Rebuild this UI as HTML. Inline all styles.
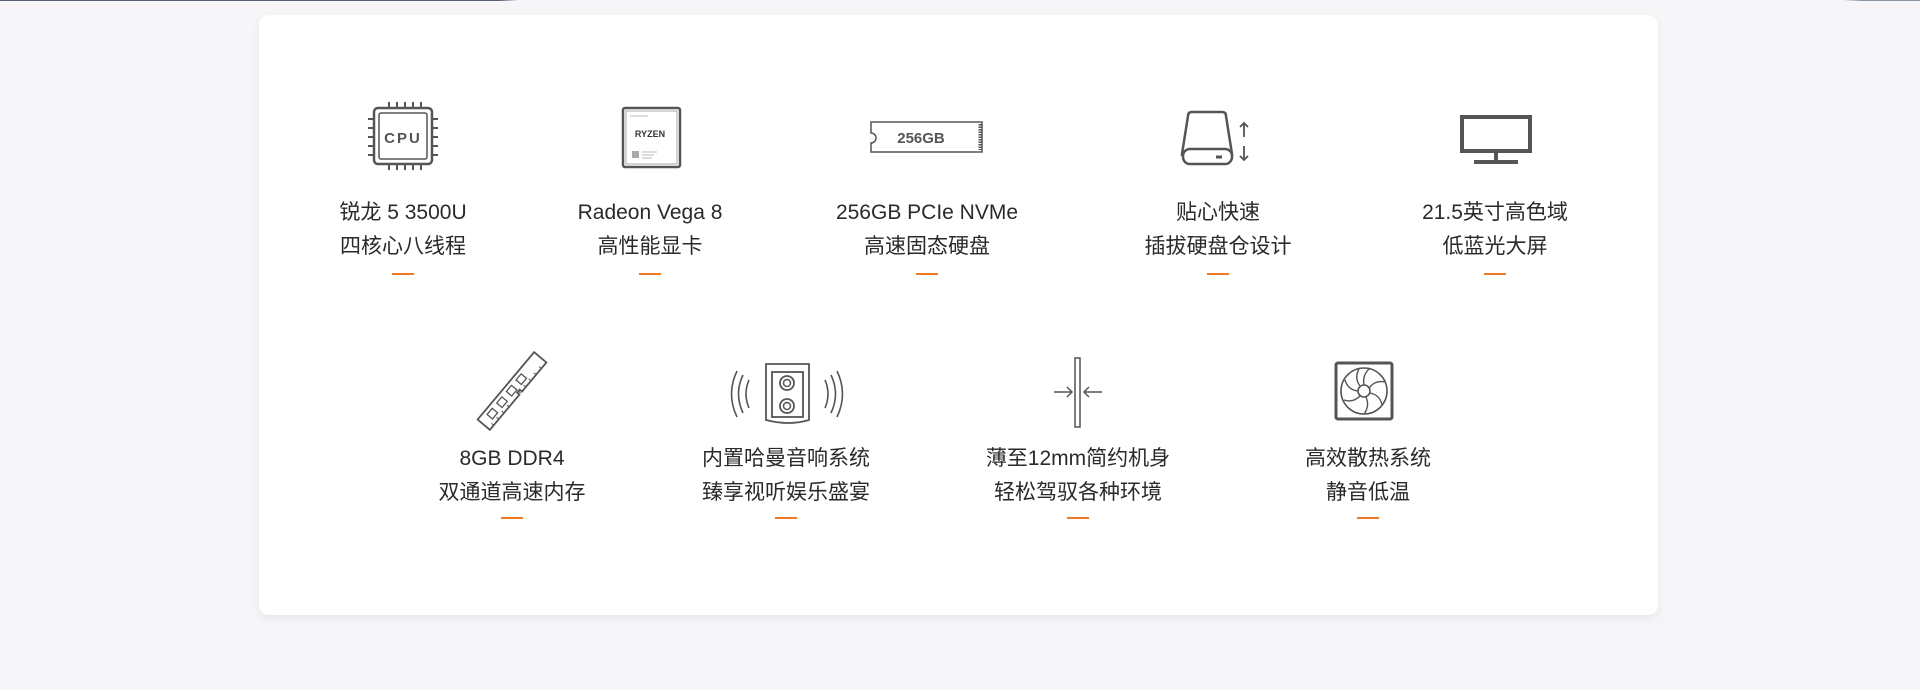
<!DOCTYPE html>
<html><head><meta charset="utf-8"><style>
html,body{margin:0;padding:0}
body{width:1920px;height:690px;background:#f6f6f8;position:relative;overflow:hidden;font-family:"Liberation Sans","Noto Sans CJK SC",sans-serif}
.top{position:absolute;left:0;top:0;width:1920px;height:1px;background:linear-gradient(90deg,#556070 0,#556070 26%,#f6f6f8 27%,#f6f6f8 96%,#8a95a4 97%)}
.card{position:absolute;left:259px;top:15px;width:1399px;height:600px;background:#fff;border-radius:10px;box-shadow:0 4px 10px rgba(0,0,0,0.06)}
.t{position:absolute;width:300px;margin-left:-150px;text-align:center;color:#2a2a2a;font-size:21px;line-height:34px}
.d{position:absolute;width:22px;height:2px;margin-left:-11px;background:#f07a22}
svg{position:absolute;left:0;top:0}
</style></head><body>
<div class="top"></div>
<div class="card"></div>
<svg width="1920" height="690" fill="none" stroke="#555" stroke-width="2.5">
<rect x="374" y="108" width="58" height="56" rx="4"/>
<rect x="379" y="113" width="48" height="46" rx="2" stroke-width="1.5"/>
<g stroke-width="2">
<path d="M389 102v6M397 102v6M405 102v6M413 102v6M421 102v6M389 164v6M397 164v6M405 164v6M413 164v6M421 164v6M368 119h6M368 128h6M368 137h6M368 146h6M368 155h6M432 119h6M432 128h6M432 137h6M432 146h6M432 155h6"/>
</g>
<text x="403" y="143" fill="#555" stroke="none" font-size="15" font-weight="bold" text-anchor="middle" font-family="Liberation Sans" letter-spacing="2">CPU</text>
<rect x="623" y="108" width="57" height="59" rx="2"/>
<rect x="626" y="111" width="51" height="53" stroke-width="1" stroke="#aaa"/>
<text x="650" y="137" fill="#333" stroke="none" font-size="9" font-weight="bold" text-anchor="middle" font-family="Liberation Sans">RYZEN</text>
<rect x="632" y="151" width="7" height="7" fill="#aaa" stroke="none"/>
<path d="M642 152h15M642 155h12M642 158h10M630 116h18" stroke="#bbb" stroke-width="1"/>
<path d="M871 122h111v30h-111v-9a4 4 0 0 0 0-10z" stroke-width="1.5"/>
<path d="M980 124v26" stroke-width="3" stroke-dasharray="1.5 1"/>
<text x="921" y="143" fill="#555" stroke="none" font-size="15" font-weight="bold" text-anchor="middle" font-family="Liberation Sans">256GB</text>
<path d="M1192 112h30q4 0 4 4l6 38v2"/>
<path d="M1192 112q-4 0-4 4l-6 38v2"/>
<rect x="1183" y="149" width="49" height="15" rx="7"/>
<path d="M1216 157h6" stroke-width="3"/>
<path d="M1244 123v14M1240 127l4-4 4 4M1244 146v14M1240 156l4 4 4-4" stroke-width="1.8"/>
<rect x="1462" y="117" width="68" height="34" stroke-width="4"/>
<path d="M1496 151v11M1474 162h44" stroke-width="4"/>
<g transform="translate(512 391) rotate(-50)">
<path d="M-44 -8h88v16h-38v-3h-4v3h-46z" stroke-width="1.8"/>
<rect x="-34" y="-4" width="8" height="7" stroke-width="1.3"/>
<rect x="-19" y="-4" width="8" height="7" stroke-width="1.3"/>
<rect x="-4" y="-4" width="8" height="7" stroke-width="1.3"/>
<rect x="11" y="-4" width="8" height="7" stroke-width="1.3"/>
<path d="M-38 8v-3M-30 8v-3M-22 8v-3M-14 8v-3M4 8v-3M12 8v-3M20 8v-3M28 8v-3M36 8v-3" stroke-width="1"/>
</g>
<path d="M766 364h43v56q-20 6-43 0z" stroke-width="1.8"/>
<rect x="772" y="372" width="31" height="45" stroke-width="1.8"/>
<circle cx="787" cy="383" r="7" stroke-width="1.8"/><circle cx="787" cy="383" r="3.5" stroke-width="1.5"/>
<circle cx="787" cy="406" r="7" stroke-width="1.8"/><circle cx="787" cy="406" r="3.5" stroke-width="1.5"/>
<path d="M749 380q-6 14 0 28M743 375q-9 19 0 38M737 371q-11 23 0 46M825 380q6 14 0 28M831 375q9 19 0 38M837 371q11 23 0 46" stroke-width="1.6"/>
<rect x="1075" y="358" width="5" height="69" stroke-width="1.5"/>
<path d="M1054 392h18M1067 387l5 5-5 5M1102 392h-18M1089 387l-5 5 5 5" stroke-width="1.5"/>
<rect x="1336" y="363" width="56" height="56" rx="2" stroke-width="3"/>
<circle cx="1364" cy="391" r="23" stroke-width="1.6"/>
<circle cx="1364" cy="391" r="6" stroke-width="1.6"/>
<g stroke-width="1.4">
<path d="M1364 385q-2-10 6-17M1369 388q6-8 16-6M1370 393q10 2 12 12M1366 397q4 9-2 17M1360 396q-7 7-16 4M1358 391q-10-1-13-11M1360 386q-6-8-1-17"/>
</g>
</svg>
<div class="t" style="left:403px;top:196px">锐龙 5 3500U<br>四核心八线程</div><div class="d" style="left:403px;top:273px"></div>
<div class="t" style="left:650px;top:196px">Radeon Vega 8<br>高性能显卡</div><div class="d" style="left:650px;top:273px"></div>
<div class="t" style="left:927px;top:196px">256GB PCIe NVMe<br>高速固态硬盘</div><div class="d" style="left:927px;top:273px"></div>
<div class="t" style="left:1218px;top:196px">贴心快速<br>插拔硬盘仓设计</div><div class="d" style="left:1218px;top:273px"></div>
<div class="t" style="left:1495px;top:196px">21.5英寸高色域<br>低蓝光大屏</div><div class="d" style="left:1495px;top:273px"></div>
<div class="t" style="left:512px;top:442px">8GB DDR4<br>双通道高速内存</div><div class="d" style="left:512px;top:517px"></div>
<div class="t" style="left:786px;top:442px">内置哈曼音响系统<br>臻享视听娱乐盛宴</div><div class="d" style="left:786px;top:517px"></div>
<div class="t" style="left:1078px;top:442px">薄至12mm简约机身<br>轻松驾驭各种环境</div><div class="d" style="left:1078px;top:517px"></div>
<div class="t" style="left:1368px;top:442px">高效散热系统<br>静音低温</div><div class="d" style="left:1368px;top:517px"></div>
</body></html>
